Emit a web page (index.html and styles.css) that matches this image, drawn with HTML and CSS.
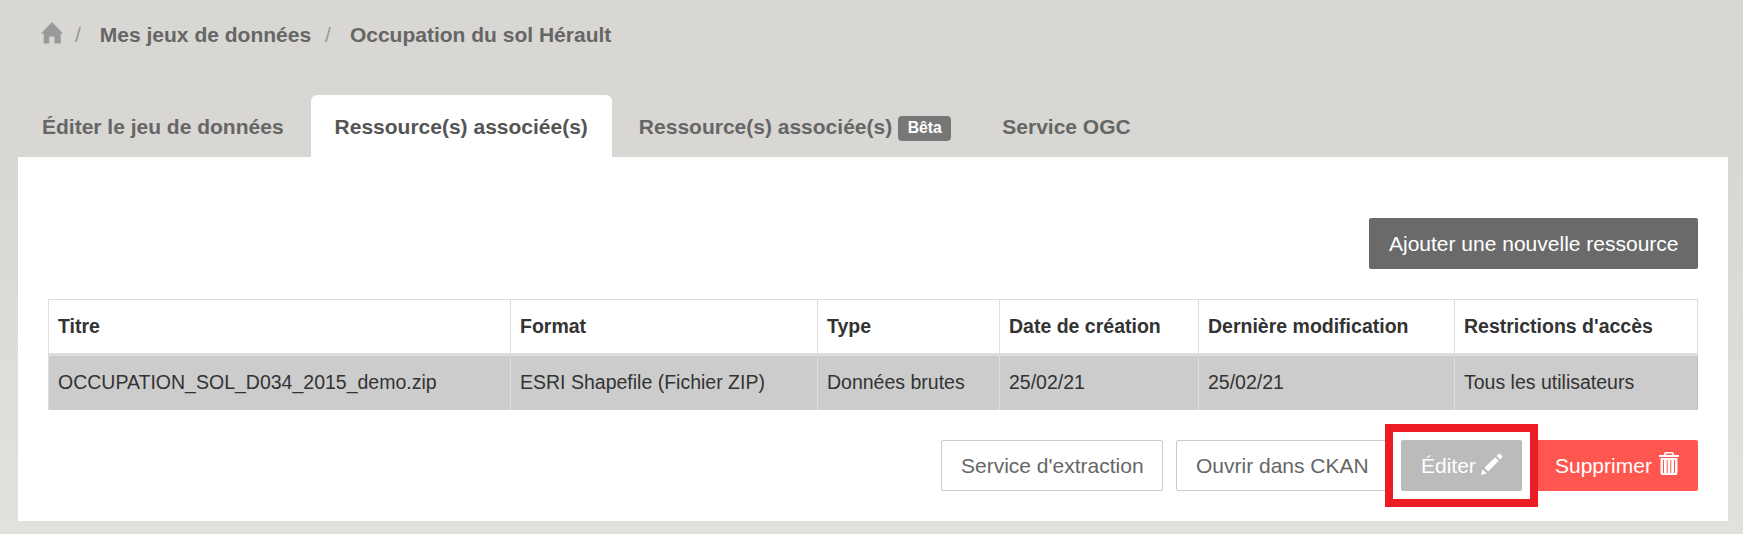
FILE: index.html
```html
<!DOCTYPE html>
<html lang="fr">
<head>
<meta charset="utf-8">
<title>Occupation du sol Hérault</title>
<link rel="stylesheet" href="styles.css">
</head>
<body>
<nav class="breadcrumb">
  <a class="home"><svg width="22" height="22" viewBox="0 0 22 22"><path d="M11 0 L22 11.6 H19.7 V21.5 H13.5 V14.5 H8.3 V21.5 H2.7 V11.6 H0 Z"/></svg></a>
  <span class="sep">/</span>
  <a class="crumb">Mes jeux de données</a>
  <span class="sep">/</span>
  <a class="crumb">Occupation du sol Hérault</a>
</nav>
<nav class="tabs">
  <a class="tab">Éditer le jeu de données</a>
  <a class="tab active">Ressource(s) associée(s)</a>
  <a class="tab">Ressource(s) associée(s)<span class="badge">Bêta</span></a>
  <a class="tab">Service OGC</a>
</nav>
<main class="panel">
  <div class="toolbar"><button class="btn dark">Ajouter une nouvelle ressource</button></div>
  <table class="resources">
    <colgroup><col class="c1"><col class="c2"><col class="c3"><col class="c4"><col class="c5"><col class="c6"></colgroup>
    <thead><tr><th>Titre</th><th>Format</th><th>Type</th><th>Date de création</th><th>Dernière modification</th><th>Restrictions d'accès</th></tr></thead>
    <tbody><tr><td>OCCUPATION_SOL_D034_2015_demo.zip</td><td>ESRI Shapefile (Fichier ZIP)</td><td>Données brutes</td><td>25/02/21</td><td>25/02/21</td><td>Tous les utilisateurs</td></tr></tbody>
  </table>
  <div class="actions">
    <button class="btn outline extract">Service d'extraction</button>
    <button class="btn outline ckan">Ouvrir dans CKAN</button>
    <div class="highlighted">
      <button class="btn gray">Éditer<svg class="pencil" width="22" height="22" viewBox="0 0 22 22"><path d="M0 22 L1.4 16.3 L5.7 20.6 Z M3.4 14.8 L14.2 4.2 L17.8 7.8 L7.2 18.6 Z M15.6 2.9 L17.4 1 Q18.3 .2 19.2 1.1 L21 2.9 Q21.8 3.8 21 4.7 L19.1 6.5 Z"/></svg></button>
    </div>
    <button class="btn red">Supprimer<svg class="trash" width="20" height="23" viewBox="0 0 20 23"><path d="M0 3 H5 V2 Q5 0 7 0 H13 Q15 0 15 2 V3 H20 V5 H0 Z M7 3 H13 V1.5 H7 Z M1.5 6 H18.5 V21 Q18.5 23 16.5 23 H3.5 Q1.5 23 1.5 21 Z M4 8 V21 H5 V8 Z M7.7 8 V21 H8.7 V8 Z M11.3 8 V21 H12.3 V8 Z M15 8 V21 H16 V8 Z"/></svg></button>
  </div>
</main>
</body>
</html>
```
FILE: styles.css
```css
* { box-sizing: border-box; }
body {
  margin: 0;
  height: 534px;
  overflow: hidden;
  padding: 0 15px 0 18px;
  background: linear-gradient(#d8d7d3 160px, #e2e1de 534px);
  font: 21px/30px "Liberation Sans", Arial, sans-serif;
  color: #333;
  white-space: nowrap;
}
.breadcrumb {
  display: flex;
  align-items: center;
  height: 95px;
  padding: 0 0 26px 23px;
  font-weight: bold;
  color: #666;
}
.home { display: flex; width: 22px; height: 26px; margin-right: 12px; }
.home svg { fill: #999; }
.sep { color: #999; font-weight: normal; }
.crumb { margin: 0 14px 0 19px; }
.tabs { display: flex; gap: 3px; height: 62px; font-weight: bold; color: #666; }
.tab { display: flex; align-items: center; padding: 2px 24px 0; border-radius: 6px 6px 0 0; }
.tab.active { background: #fff; color: #555; }
.badge {
  height: 25px;
  margin: 3px 0 0 6px;
  padding: 0 9.5px;
  border-radius: 4px;
  background: #777;
  color: #fff;
  font-size: 15.75px;
  line-height: 23px;
}
.panel { height: 364px; padding: 61px 30px 0; background: #fff; }
.toolbar { display: flex; justify-content: flex-end; margin-bottom: 30px; }
.btn {
  display: flex;
  align-items: center;
  height: 51px;
  padding: 0 0 0 20px;
  border: 0;
  border-radius: 2px;
  color: #fff;
  font: inherit;
}
.dark { width: 329px; background: #6a6a6a; }
.outline { padding-left: 19px; border: 1px solid #ccc; background: #fff; color: #666; }
.extract { width: 222px; }
.ckan { width: 212px; }
.gray { width: 121px; background: #bbb; }
.red { width: 163px; background: #ff5750; }
.resources {
  width: 1650px;
  table-layout: fixed;
  border-collapse: separate;
  border-spacing: 0;
  border-left: 1px solid #ddd;
  font-size: 19.5px;
}
.resources th, .resources td { padding: 0 9px 2px; border-right: 1px solid #ddd; text-align: left; }
.resources th { height: 57px; border-top: 1px solid #ddd; border-bottom: 3px solid #ddd; }
.resources td { height: 54px; background: #ccc; }
.resources td:last-child { border-right-color: #bbb; }
.c1 { width: 462px; }
.c2 { width: 307px; }
.c3 { width: 182px; }
.c4 { width: 199px; }
.c5 { width: 256px; }
.actions { display: flex; justify-content: flex-end; gap: 13px; margin-top: 30px; }
.highlighted { position: relative; }
.highlighted::after {
  content: "";
  position: absolute;
  z-index: 2;
  inset: -16px;
  border: 8px solid #ed1c24;
  box-shadow: inset 0 0 0 8px #fff;
}
.pencil { flex: none; margin: -4px 0 0 5px; fill: #fff; }
.trash { flex: none; margin: -5px 0 0 7px; fill: #fff; fill-rule: evenodd; }
```
